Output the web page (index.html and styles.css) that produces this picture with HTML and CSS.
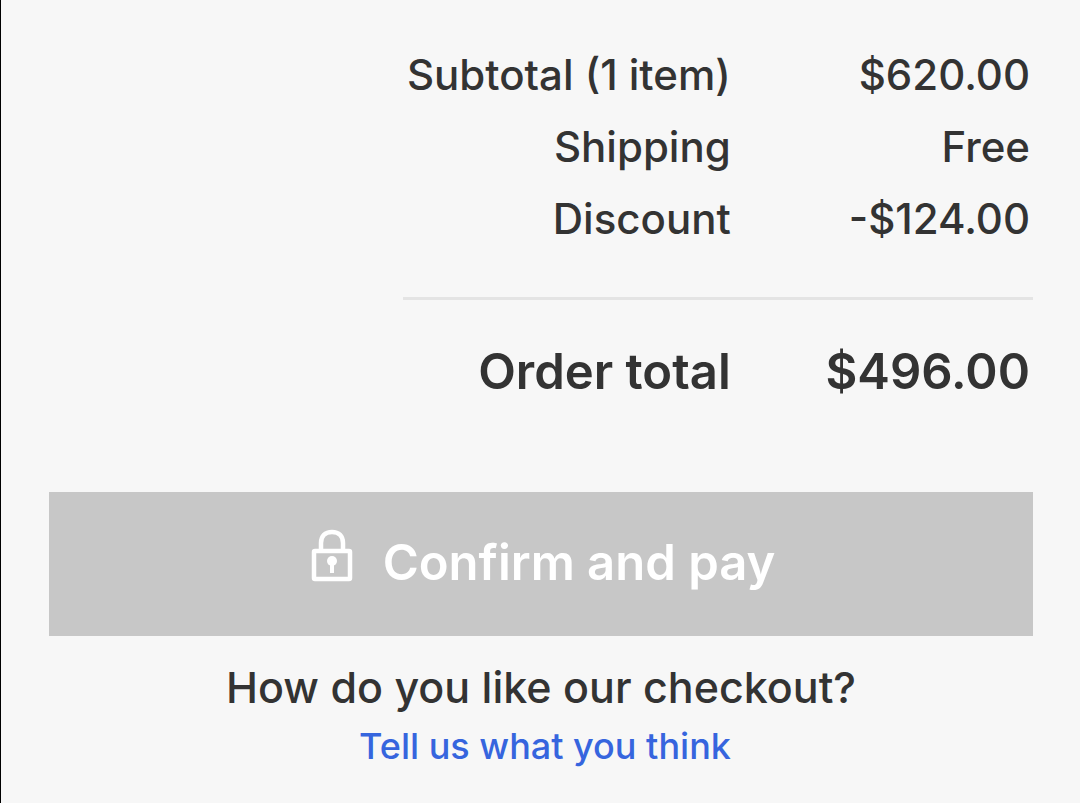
FILE: index.html
```html
<!DOCTYPE html>
<html lang="en">
<head>
  <meta charset="UTF-8" />
  <meta name="viewport" content="width=device-width, initial-scale=1.0"/>
  <title>Checkout</title>
  <link rel="stylesheet" href="styles.css">
</head>
<body>
  <main class="checkout">
    <table class="summary">
      <tbody>
        <tr>
          <th scope="row">Subtotal (1 item)</th>
          <td>$620.00</td>
        </tr>
        <tr>
          <th scope="row">Shipping</th>
          <td>Free</td>
        </tr>
        <tr>
          <th scope="row">Discount</th>
          <td>-$124.00</td>
        </tr>
      </tbody>
      <tfoot>
        <tr>
          <th scope="row">Order total</th>
          <td>$496.00</td>
        </tr>
      </tfoot>
    </table>

    <button class="pay-button" type="button" disabled>
      <svg class="lock" viewBox="0 0 42 54" aria-hidden="true">
        <path d="M10 21V14C10 7 14 3 21 3S32 7 32 14V21" fill="none" stroke="currentColor" stroke-width="4.500"/>
        <rect x="3" y="22" width="36" height="28" rx="1" fill="none" stroke="currentColor" stroke-width="4.500"/>
        <circle cx="21" cy="32" r="5" fill="currentColor"/>
        <path d="M19 33H23V44H19Z" fill="currentColor"/>
      </svg>
      <span>Confirm and pay</span>
    </button>

    <div class="feedback">
      <p>How do you like our checkout?</p>
      <a href="#feedback">Tell us what you think</a>
    </div>
  </main>
</body>
</html>
```
FILE: styles.css
```css
* {
  box-sizing: border-box;
}
body {
  margin: 0;
  min-height: 100vh;
  border-left: 1px solid #000;
  background-color: #f7f7f7;
  color: #333;
  font-family: Inter, "Liberation Sans", sans-serif;
  font-size: 42px;
  font-weight: 450;
}
.checkout {
  padding: 39px 47px 24px 48px;
}
.summary {
  width: 64%;
  margin-left: auto;
  border-collapse: collapse;
  line-height: 72px;
}
.summary th,
.summary td {
  padding: 0 3px 0 0;
  font-weight: 450;
  text-align: right;
  white-space: nowrap;
}
.summary th {
  width: 52%;
  padding-right: 0;
}
.summary tbody tr:last-child th,
.summary tbody tr:last-child td {
  padding-bottom: 42px;
}
.summary tfoot {
  border-top: 3px solid #e4e4e4;
}
.summary tfoot th,
.summary tfoot td {
  padding-top: 36px;
  font-size: 49px;
  font-weight: 600;
}
.pay-button {
  display: flex;
  justify-content: center;
  align-items: center;
  gap: 30px;
  width: 100%;
  height: 144px;
  margin-top: 84px;
  padding: 0 0 4px 4px;
  border: none;
  background-color: #c7c7c7;
  color: white;
  font-family: inherit;
  font-size: 49px;
  font-weight: 600;
}
.lock {
  width: 42px;
  height: 54px;
  margin-bottom: 12px;
}
.feedback {
  margin-top: 20px;
  text-align: center;
}
.feedback p {
  margin: 0;
  font-size: 43px;
  line-height: 62px;
}
.feedback a {
  display: inline-block;
  padding-left: 8px;
  color: #3665de;
  font-size: 36px;
  line-height: 52px;
  text-decoration: none;
}
```
